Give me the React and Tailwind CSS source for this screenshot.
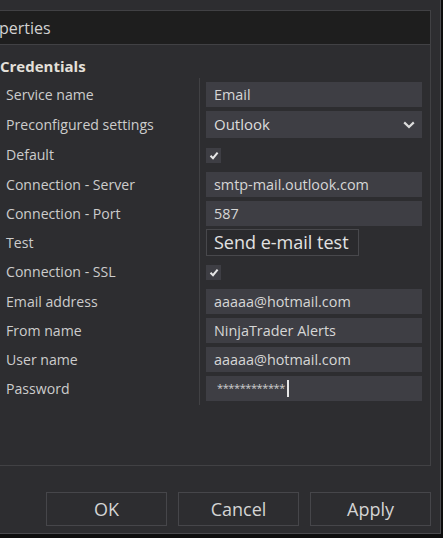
import React from "react";

const font = { fontFamily: '"Open Sans", "Noto Sans", sans-serif' };

const rows = [
  { label: "Service name", kind: "input", value: "Email", h: "h-[29px]" },
  { label: "Preconfigured settings", kind: "select", value: "Outlook", h: "h-[31px]" },
  { label: "Default", kind: "check", h: "h-[30px]" },
  { label: "Connection - Server", kind: "input", value: "smtp-mail.outlook.com", h: "h-[29px]" },
  { label: "Connection - Port", kind: "input", value: "587", h: "h-[29px]" },
  { label: "Test", kind: "button", value: "Send e-mail test", h: "h-[29px]" },
  { label: "Connection - SSL", kind: "check", h: "h-[30px]" },
  { label: "Email address", kind: "input", value: "aaaaa@hotmail.com", h: "h-[29px]" },
  { label: "From name", kind: "input", value: "NinjaTrader Alerts", h: "h-[29px]" },
  { label: "User name", kind: "input", value: "aaaaa@hotmail.com", h: "h-[29px]" },
  { label: "Password", kind: "password", value: "************", h: "h-[29px]" },
];

const Check = () => (
  <div className="w-[15px] h-[15px] bg-[#3e3e44] flex items-center justify-center">
    <svg width="10" height="9" viewBox="0 0 10 9">
      <path d="M1.5 4.8 L4 7.2 L8.6 1.6" fill="none" stroke="#e6e6e6" strokeWidth="2" />
    </svg>
  </div>
);

const Value = ({ row }) => {
  if (row.kind === "check") return <Check />;
  if (row.kind === "button") {
    return (
      <div className="h-[27px] w-[153px] border border-[#48484c] bg-[#2a2a2d] flex items-center pl-[7px] text-[18px] text-[#e2e2e2]">
        {row.value}
      </div>
    );
  }
  if (row.kind === "select") {
    return (
      <div className="h-[27px] w-[216px] bg-[#3e3e44] flex items-center justify-between pl-[8px] pr-[7px] text-[15px] text-[#dcdcdc]">
        <span>{row.value}</span>
        <svg width="12" height="8" viewBox="0 0 12 8">
          <path d="M1.2 1.4 L6 6 L10.8 1.4" fill="none" stroke="#dcdcdc" strokeWidth="2.2" />
        </svg>
      </div>
    );
  }
  if (row.kind === "password") {
    return (
      <div className="h-[25px] w-[216px] bg-[#3e3e44] flex items-center pl-[11px] text-[11px] text-[#cfcfcf]">
        <span className="tracking-[-0.4px]">{row.value}</span>
        <span className="ml-[2px] w-[2px] h-[17px] bg-[#e6e6e6]" />
      </div>
    );
  }
  return (
    <div className="h-[25px] w-[216px] bg-[#3e3e44] flex items-center pl-[8px] text-[14.4px] text-[#d6d6d6]">
      {row.value}
    </div>
  );
};

export default function App() {
  return (
    <div className="w-[443px] h-[538px] bg-[#0d0d0d] overflow-hidden" style={font}>
      <div className="w-[441px] h-[534px] bg-[#2d2d30] border-r border-b border-[#4a4a4e] flex flex-col">
        <div className="h-[10px] shrink-0" />

        <div className="w-[431px] h-[456px] border-r border-b border-[#414144] flex flex-col">
          <div className="h-[35px] bg-[#1e1e1e] border-t border-b border-[#414144] flex items-center text-[16px] text-[#d2d2d2] -ml-[1px]">
            perties
          </div>

          <div className="h-[32px] flex items-end text-[15px] font-bold text-[#e4e0da]">
            Credentials
          </div>

          <div className="grid grid-cols-[199px_1fr] mt-[1px]">
            <div className="h-[2px]" />
            <div className="h-[2px] border-l border-[#414144]" />
            {rows.map((row) => (
              <React.Fragment key={row.label}>
                <div className={`${row.h} flex items-center pl-[6px] text-[14.1px] text-[#cccccc]`}>
                  {row.label}
                </div>
                <div className={`${row.h} flex items-center border-l border-[#414144] pl-[6px]`}>
                  <Value row={row} />
                </div>
              </React.Fragment>
            ))}
            <div className="h-[2px]" />
            <div className="h-[2px] border-l border-[#414144]" />
          </div>
        </div>

        <div className="flex justify-end gap-[11px] pr-[9px] mt-[26px]">
          {["OK", "Cancel", "Apply"].map((b) => (
            <div
              key={b}
              className="w-[121px] h-[34px] border border-[#46464a] flex items-center justify-center text-[18px] text-[#d4d4d4]"
            >
              {b}
            </div>
          ))}
        </div>
      </div>
    </div>
  );
}
